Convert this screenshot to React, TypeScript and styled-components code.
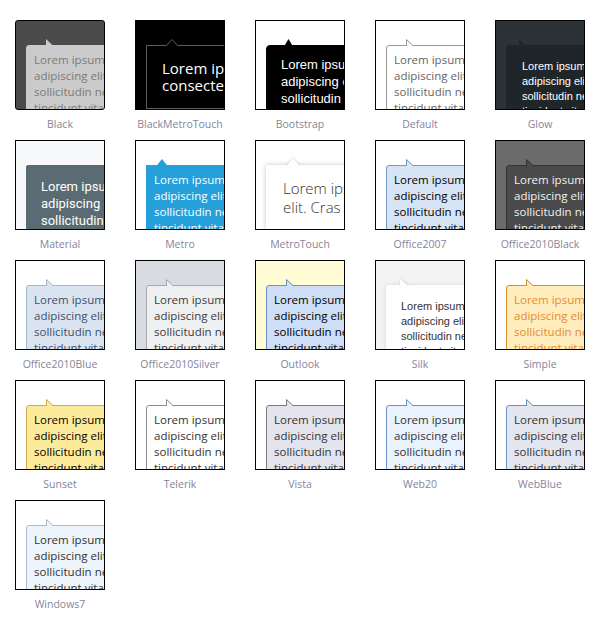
import React from "react";
import styled, { createGlobalStyle } from "styled-components";

type ArrowKind = "corner" | "center" | "none";

interface Skin {
  name: string;
  boxBg: string;
  boxRadius?: number;
  bg: string;
  border: string;
  radius: number;
  color: string;
  font: string;
  size: number;
  lh: number;
  pad: string;
  weight?: number;
  shadow?: string;
  arrow: ArrowKind;
  arrowX: number;
  arrowW: number;
  arrowH: number;
  lines: string[];
}

const SEGOE = `"Open Sans", "Noto Sans", sans-serif`;
const ARIAL = `"Liberation Sans", Arial, sans-serif`;

const LINES = [
  "Lorem ipsum dolor sit amet, consectetur",
  "adipiscing elit. Cras vel nisl",
  "sollicitudin nec, rhoncus",
  "tincidunt vitae arcu.",
];
const TOUCH_DARK = ["Lorem ipsum dolor sit amet,", "consectetur adipiscing elit."];
const TOUCH_LIGHT = [
  "Lorem ipsum dolor sit amet, consectetur adipiscing",
  "elit. Cras vel nisl sollicitudin.",
];

// the usual small Segoe-style skin, most of the list uses it
const basic = (
  name: string,
  bg: string,
  border: string,
  color: string,
  boxBg = "#fff"
): Skin => ({
  name,
  boxBg,
  bg,
  border,
  radius: 3,
  color,
  font: SEGOE,
  size: 11.5,
  lh: 16,
  pad: "6px 7px",
  arrow: "corner",
  arrowX: 20,
  arrowW: 7,
  arrowH: 6,
  lines: LINES,
});

const skins: Skin[] = [
  { ...basic("Black", "#cbcbcb", "#cbcbcb", "#7a7a7a", "#4b4b4b"), boxRadius: 3 },
  {
    ...basic("BlackMetroTouch", "#000", "#5c5c5c", "#fff", "#000"),
    radius: 0,
    size: 15,
    lh: 17,
    pad: "14px 15px",
    arrow: "center",
    arrowX: 19,
    arrowW: 12,
    arrowH: 6,
    lines: TOUCH_DARK,
  },
  {
    ...basic("Bootstrap", "#000", "#000", "#fff"),
    radius: 4,
    font: ARIAL,
    size: 13,
    lh: 17,
    pad: "10px 14px",
    arrow: "center",
    arrowX: 17,
    arrowW: 9,
    arrowH: 6,
  },
  basic("Default", "#fff", "#9a9a9a", "#666"),
  {
    ...basic("Glow", "#1f2629", "#1f2629", "#fff", "#2b3337"),
    font: ARIAL,
    size: 11,
    lh: 15,
    pad: "13px 15px",
    arrowX: 13,
  },
  {
    ...basic("Material", "#5b6b73", "#5b6b73", "#fff", "#f7f8fa"),
    radius: 2,
    font: `Roboto, sans-serif`,
    size: 13,
    lh: 17,
    pad: "12px 14px",
    arrow: "none",
  },
  {
    ...basic("Metro", "#25a0da", "#25a0da", "#fff"),
    radius: 0,
    arrow: "center",
    arrowX: 9,
    arrowW: 12,
    arrowH: 6,
  },
  {
    ...basic("MetroTouch", "#fff", "#fff", "#333"),
    radius: 0,
    size: 15,
    lh: 19,
    weight: 300,
    pad: "13px 16px",
    shadow: "0 0 5px rgba(0,0,0,0.22)",
    arrow: "center",
    arrowX: 19,
    arrowW: 14,
    arrowH: 7,
    lines: TOUCH_LIGHT,
  },
  basic("Office2007", "#d6e4f6", "#7598ca", "#000"),
  basic("Office2010Black", "#4a4a4a", "#333", "#f2f2f2", "#6b6b6b"),
  basic("Office2010Blue", "#dae4f1", "#a3b6cf", "#3b4f6e"),
  basic("Office2010Silver", "#eff0f2", "#a6a9ad", "#3b3b3b", "#d8dbdf"),
  basic("Outlook", "#cedef6", "#6f90c6", "#000", "#fffcd6"),
  {
    ...basic("Silk", "#fff", "#fff", "#333", "#f3f3f3"),
    font: ARIAL,
    size: 11,
    lh: 15,
    pad: "13px 14px",
    shadow: "0 0 4px rgba(0,0,0,0.12)",
    arrowX: 14,
    arrowW: 8,
  },
  basic("Simple", "#ffedbd", "#d4902a", "#e38b35"),
  basic("Sunset", "#fdeb9c", "#d4a851", "#000"),
  basic("Telerik", "#fff", "#8c8c8c", "#333"),
  basic("Vista", "#e4e4ee", "#7a7a7a", "#333"),
  basic("Web20", "#eaf2fd", "#6b8fc7", "#333"),
  basic("WebBlue", "#e3e5ef", "#6b8fc7", "#333"),
  basic("Windows7", "#eef4fc", "#a9b9d0", "#333"),
];

const GlobalStyle = createGlobalStyle`
  body {
    margin: 0;
    background: #fff;
    font-family: "Open Sans", "Noto Sans", sans-serif;
  }
`;

const Gallery = styled.div`
  display: grid;
  grid-template-columns: repeat(5, 90px);
  grid-auto-rows: 120px;
  column-gap: 30px;
  padding: 20px 0 0 15px;
`;

const Cell = styled.div`
  display: flex;
  flex-direction: column;
  align-items: center;
`;

const Thumb = styled.div<{ $bg: string; $radius: number }>`
  width: 88px;
  height: 88px;
  border: 1px solid #000;
  border-radius: ${({ $radius }) => $radius}px;
  background: ${({ $bg }) => $bg};
  overflow: hidden;
`;

const Bubble = styled.div<{ $skin: Skin }>`
  position: relative;
  margin: 24px 0 0 10px;
  width: 260px;
  box-sizing: border-box;
  background: ${({ $skin }) => $skin.bg};
  border: 1px solid ${({ $skin }) => $skin.border};
  border-radius: ${({ $skin }) => $skin.radius}px;
  box-shadow: ${({ $skin }) => $skin.shadow || "none"};
  padding: ${({ $skin }) => $skin.pad};
  color: ${({ $skin }) => $skin.color};
  font-family: ${({ $skin }) => $skin.font};
  font-size: ${({ $skin }) => $skin.size}px;
  font-weight: ${({ $skin }) => $skin.weight || 400};
  line-height: ${({ $skin }) => $skin.lh}px;
`;

const Line = styled.div`
  white-space: nowrap;
`;

const ArrowSvg = styled.svg<{ $x: number; $h: number; $shadow?: boolean }>`
  position: absolute;
  left: ${({ $x }) => $x}px;
  top: ${({ $h }) => -($h + 1)}px;
  overflow: visible;
  filter: ${({ $shadow }) =>
    $shadow ? "drop-shadow(0 -1px 1px rgba(0,0,0,0.12))" : "none"};
`;

const Label = styled.div`
  margin-top: 7px;
  font-family: "Open Sans", "Noto Sans", sans-serif;
  font-size: 10.5px;
  line-height: 14px;
  color: #85859a;
  white-space: nowrap;
`;

const Arrow: React.FC<{ skin: Skin }> = ({ skin }) => {
  const { arrow, arrowW: w, arrowH: h, bg, border } = skin;
  if (arrow === "none") return null;
  const fill =
    arrow === "corner"
      ? `0,${h + 1.5} 0,0 ${w + 1},${h + 1.5}`
      : `0,${h + 1.5} ${w / 2},0 ${w},${h + 1.5}`;
  const edge =
    arrow === "corner"
      ? `M0.5,${h + 1} V0.5 L${w + 0.5},${h + 1}`
      : `M0,${h + 1} L${w / 2},0.5 L${w},${h + 1}`;
  return (
    <ArrowSvg
      $x={arrow === "corner" ? -1 + skin.arrowX : skin.arrowX}
      $h={h}
      $shadow={!!skin.shadow}
      width={w + 1}
      height={h + 1}
    >
      <polygon points={fill} fill={bg} />
      {border !== bg && <path d={edge} fill="none" stroke={border} strokeWidth={1} />}
    </ArrowSvg>
  );
};

const Preview: React.FC<{ skin: Skin }> = ({ skin }) => (
  <Cell>
    <Thumb $bg={skin.boxBg} $radius={skin.boxRadius || 0}>
      <Bubble $skin={skin}>
        <Arrow skin={skin} />
        {skin.lines.map((l, i) => (
          <Line key={i}>{l}</Line>
        ))}
      </Bubble>
    </Thumb>
    <Label>{skin.name}</Label>
  </Cell>
);

export default function App() {
  return (
    <>
      <GlobalStyle />
      <Gallery>
        {skins.map((s) => (
          <Preview key={s.name} skin={s} />
        ))}
      </Gallery>
    </>
  );
}
